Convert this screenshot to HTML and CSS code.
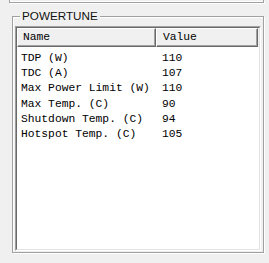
FILE: index.html
```html
<!DOCTYPE html>
<html lang="en">
<head>
  <meta charset="UTF-8" />
  <title>Powertune</title>
  <link rel="stylesheet" href="styles.css">
</head>
<body>

  <!-- bottom edge of the panel above -->
  <div class="panel-top"></div>

  <div class="group">
    <span class="group-label">POWERTUNE</span>

    <div class="list">
      <div class="list-inner">
        <div class="list-head">
          <div class="col col-name">Name</div>
          <div class="col col-value">Value</div>
        </div>

        <div class="rows">
          <div class="row"><span class="cell-name">TDP (W)</span><span class="cell-value">110</span></div>
          <div class="row"><span class="cell-name">TDC (A)</span><span class="cell-value">107</span></div>
          <div class="row"><span class="cell-name">Max Power Limit (W)</span><span class="cell-value">110</span></div>
          <div class="row"><span class="cell-name">Max Temp. (C)</span><span class="cell-value">90</span></div>
          <div class="row"><span class="cell-name">Shutdown Temp. (C)</span><span class="cell-value">94</span></div>
          <div class="row"><span class="cell-name">Hotspot Temp. (C)</span><span class="cell-value">105</span></div>
        </div>
      </div>
    </div>
  </div>

</body>
</html>
```

FILE: styles.css
```css
body {
  margin: 0;
  padding: 0;
  background: #f0f0f0;
  width: 269px;
  height: 263px;
  overflow: hidden;
}

.panel-top {
  margin-left: 9px;
  width: 253px;
  height: 2px;
  border: 1px solid #a0a0a0;
  border-top: none;
  box-shadow: 1px 1px 0 #fff, inset 1px -1px 0 #fff;
}

.group {
  position: relative;
  margin: 13px 0 0 12px;
  width: 246px;
  height: 225px;
  padding: 9px 2px 1px 2px;
  border: 1px solid #a0a0a0;
  box-shadow: 1px 1px 0 #fff, inset 1px 1px 0 #fff;
}

.group-label {
  position: absolute;
  top: -8px;
  left: 7px;
  padding: 0 2px;
  background: #f0f0f0;
  font-family: "Liberation Sans", Arial, sans-serif;
  font-size: 11.7px;
  line-height: 14px;
  color: #111;
}

.list {
  height: 223px;
  border: 1px solid;
  border-color: #a0a0a0 #fff #fff #a0a0a0;
}

.list-inner {
  height: 221px;
  border: 1px solid;
  border-color: #696969 #e3e3e3 #e3e3e3 #696969;
  background: #fff;
  font-family: "Liberation Mono", "Courier New", monospace;
  font-size: 11.3px;
  color: #000;
}

.list-head {
  display: flex;
  height: 19px;
  background: #f0f0f0;
}

.col {
  box-sizing: border-box;
  height: 19px;
  line-height: 17px;
  border: 1px solid;
  border-color: #fff #696969 #696969 #fff;
  box-shadow: inset -1px -1px 0 #a0a0a0;
}

.col-name {
  width: 139px;
  padding-left: 5px;
}

.col-value {
  width: 102px;
  padding-left: 6px;
}

.rows {
  padding-top: 4px;
}

.row {
  display: flex;
  height: 15.2px;
  line-height: 15px;
}

.cell-name {
  width: 139px;
  padding-left: 4px;
  box-sizing: border-box;
  white-space: nowrap;
}

.cell-value {
  padding-left: 6px;
}
```
